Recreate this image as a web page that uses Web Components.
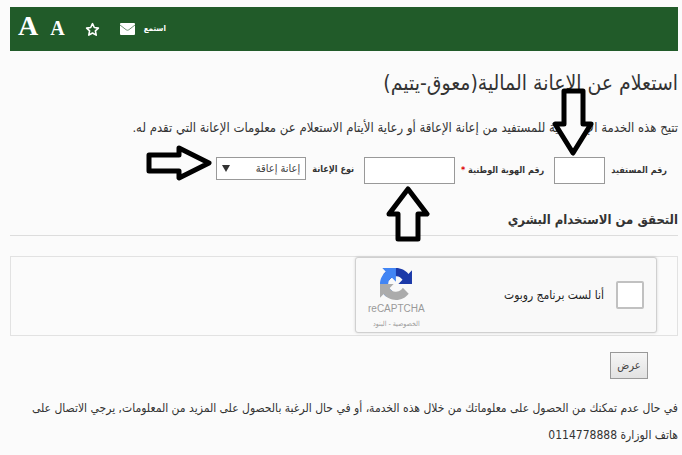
<!DOCTYPE html>
<html lang="ar" dir="rtl">
<head>
<meta charset="utf-8">
<title>استعلام عن الإعانة المالية</title>
<style>
  body {
    margin: 0;
    background: #fbfbfb;
    color: #333;
    font-family: "DejaVu Sans Condensed", "DejaVu Sans", sans-serif;
    font-size: 12px;
  }
</style>
</head>
<body>
<aid-page>
  <tool-bar slot="bar"></tool-bar>
  <span slot="title">استعلام عن الاعانة المالية(معوق-يتيم)</span>
  <span slot="intro">تتيح هذه الخدمة الإلكترونية للمستفيد من إعانة الإعاقة أو رعاية الأيتام الاستعلام عن معلومات الإعانة التي تقدم له.</span>
  <text-field slot="fields" class="narrow" label="رقم المستفيد" arrow="down"></text-field>
  <text-field slot="fields" class="wide" label="رقم الهوية الوطنية" arrow="up" required></text-field>
  <select-field slot="fields" label="نوع الإعانة" option="إعانة إعاقة"></select-field>
  <span slot="check-title">التحقق من الاستخدام البشري</span>
  <robot-check slot="check"></robot-check>
  <show-button slot="action">عرض</show-button>
  <span slot="note">في حال عدم تمكنك من الحصول على معلوماتك من خلال هذه الخدمة، أو في حال الرغبة بالحصول على المزيد من المعلومات, يرجي الاتصال على هاتف الوزارة 0114778888</span>
</aid-page>
<script>
class BaseElement extends HTMLElement {
  constructor() {
    super();
    this.attachShadow({ mode: 'open' });
  }
  connectedCallback() {
    this.shadowRoot.innerHTML = this.render();
  }
  attr(name) {
    return this.getAttribute(name) || '';
  }
}

customElements.define('aid-page',
class extends BaseElement {
  render() {
    return `
      <style>
        :host {
          display: block;
          padding: 7px 4px 8px 10px;
        }
        h1, h2, p { margin: 0; }
        h1 {
          margin-top: 16px;
          font-size: 21px;
          line-height: 32px;
          font-weight: normal;
        }
        .intro {
          margin-top: 16px;
          font-size: 13px;
          line-height: 26px;
        }
        .fields {
          display: flex;
          align-items: flex-start;
          gap: 10px;
          margin-top: 16px;
          padding-right: 11px;
        }
        h2 {
          margin-top: 20px;
          border-bottom: 1px solid #ddd;
          font-size: 13px;
          line-height: 31px;
        }
        .check {
          display: flex;
          margin-top: 20px;
          padding: 0 20px 2px 0;
          border: 1px solid #e2e2e2;
        }
        .action {
          margin-top: 16px;
          padding-right: 30px;
        }
        .note {
          margin-top: 16px;
          line-height: 27px;
        }
      </style>
      <slot name="bar"></slot>
      <h1><slot name="title"></slot></h1>
      <p class="intro"><slot name="intro"></slot></p>
      <div class="fields"><slot name="fields"></slot></div>
      <h2><slot name="check-title"></slot></h2>
      <div class="check"><slot name="check"></slot></div>
      <div class="action"><slot name="action"></slot></div>
      <p class="note"><slot name="note"></slot></p>
    `;
  }
});

customElements.define('tool-bar',
class extends BaseElement {
  render() {
    return `
      <style>
        :host {
          display: flex;
          direction: ltr;
          align-items: center;
          height: 44px;
          padding-left: 8px;
          background: #215b29;
          color: #fff;
        }
        a {
          display: flex;
          color: inherit;
          text-decoration: none;
        }
        .sizes {
          display: flex;
          align-items: baseline;
          gap: 12px;
          padding-bottom: 4px;
          font: bold 20px/28px "Liberation Serif", serif;
        }
        .big { font-size: 28px; }
        .star { margin: 0 20px; }
        .listen {
          margin-left: 9px;
          font: bold 8px/16px "DejaVu Sans Condensed", "DejaVu Sans", sans-serif;
        }
      </style>
      <div class="sizes">
        <a class="big" href="#">A</a>
        <a href="#">A</a>
      </div>
      <a class="star" href="#" aria-label="المفضلة">
        <svg width="15" height="15" viewBox="0 0 15 14">
          <path d="M7.5 1.2 9.3 5 13.4 5.6 10.4 8.4 11.2 12.6 7.500 10.500 3.800 12.600 4.600 8.400 1.600 5.600 5.700 5Z" fill="none" stroke="#fff" stroke-width="1.6" stroke-linejoin="round"/>
        </svg>
      </a>
      <a href="#" aria-label="البريد">
        <svg width="15" height="12" viewBox="0 0 15 12">
          <rect width="15" height="12" rx="1" fill="#fff"/>
          <path d="M0 2 6.2 6.8Q7.5 7.7 8.8 6.8L15 2" fill="none" stroke="#6f9474" stroke-width="1"/>
        </svg>
      </a>
      <a class="listen" href="#">استمع</a>
    `;
  }
});

// Outlined pointer: to="up", "down" or "right"
customElements.define('hint-arrow',
class extends BaseElement {
  render() {
    const shapes = {
      up: [44, 56, 'M22 3 41 28H32V53H12V28H3Z'],
      down: [42, 68, 'M12 3H31V36H39L21 65 3 36H12Z'],
      right: [66, 36, 'M3 10H33V3L63 18 33 33V26H3Z']
    };
    const [w, h, d] = shapes[this.attr('to')];
    return `
      <style>
        :host { display: block; pointer-events: none; }
        svg { display: block; }
      </style>
      <svg width="${w}" height="${h}" viewBox="0 0 ${w} ${h}" aria-hidden="true">
        <path d="${d}" fill="#fbfbfb" stroke="#000" stroke-width="5" stroke-linejoin="round"/>
      </svg>
    `;
  }
});

customElements.define('text-field',
class extends BaseElement {
  render() {
    return `
      <style>
        :host { display: flex; gap: 6px; }
        :host(.narrow) { --w: 51px; }
        :host(.wide) { --w: 91px; }
        label {
          font-weight: bold;
          font-size: 9px;
          line-height: 27px;
          white-space: nowrap;
        }
        i { color: #d00; font-style: normal; }
        .box { position: relative; }
        input {
          display: block;
          box-sizing: border-box;
          width: var(--w);
          height: 27px;
          margin: 0;
          border: 1px solid #999;
          background: #fff;
          font: inherit;
        }
        hint-arrow { position: absolute; z-index: 1; }
        .down { bottom: 28px; left: -2px; }
        .up { top: 29px; left: 22px; }
      </style>
      <label for="f">${this.attr('label')}${this.hasAttribute('required') ? ' <i>*</i>' : ''}</label>
      <div class="box">
        <input id="f" type="text">
        <hint-arrow class="${this.attr('arrow')}" to="${this.attr('arrow')}"></hint-arrow>
      </div>
    `;
  }
});

customElements.define('select-field',
class extends BaseElement {
  render() {
    return `
      <style>
        :host { display: flex; gap: 6px; }
        label {
          font-weight: bold;
          font-size: 9px;
          line-height: 24px;
          white-space: nowrap;
        }
        .box { position: relative; }
        select {
          display: block;
          appearance: none;
          width: 90px;
          height: 23px;
          margin: 0;
          padding: 0 5px;
          border: 1px solid #999;
          border-radius: 0;
          background: #fff;
          color: #444;
          font: inherit;
          font-size: 11px;
        }
        .mark {
          position: absolute;
          left: 6px;
          top: 8px;
          border: solid transparent;
          border-width: 7px 4px 0;
          border-top-color: #333;
        }
        hint-arrow { position: absolute; top: -12px; right: 94px; }
      </style>
      <label for="s">${this.attr('label')}</label>
      <div class="box">
        <select id="s"><option>${this.attr('option')}</option></select>
        <span class="mark"></span>
        <hint-arrow to="right"></hint-arrow>
      </div>
    `;
  }
});

customElements.define('robot-check',
class extends BaseElement {
  render() {
    return `
      <style>
        :host {
          display: flex;
          align-items: center;
          box-sizing: border-box;
          width: 302px;
          height: 76px;
          padding: 0 12px;
          border: 1px solid #d0d0d0;
          border-radius: 3px;
          background: #f9f9f9;
          box-shadow: 0 0 3px rgba(0, 0, 0, .15);
          font-family: "Liberation Sans", "DejaVu Sans Condensed", "DejaVu Sans", sans-serif;
        }
        input {
          appearance: none;
          width: 28px;
          height: 28px;
          margin: 0;
          border: 2px solid #c1c1c1;
          border-radius: 2px;
          background: #fff;
        }
        label {
          flex: 1;
          margin-right: 12px;
          color: #222;
          font-size: 12px;
        }
        .brand {
          display: flex;
          flex-direction: column;
          align-items: center;
          padding-top: 8px;
          color: #999;
          font-size: 10px;
        }
        .brand span { line-height: 18px; }
        .links { line-height: 12px; font-size: 7px; }
        a { color: inherit; text-decoration: none; }
      </style>
      <input id="r" type="checkbox">
      <label for="r">أنا لست برنامج روبوت</label>
      <div class="brand">
        <svg width="32" height="32" viewBox="0 0 64 64" aria-hidden="true">
          <path fill="#1c3aa9" d="M64 31.955l-.033-1.37V4.687l-7.16 7.16C50.948 4.674 42.033.093 32.05.093c-10.389 0-19.622 4.96-25.458 12.64l11.736 11.86a15.55 15.55 0 0 1 4.754-5.334c2.05-1.6 4.952-2.906 8.968-2.906.485 0 .86.057 1.135.163 4.976.393 9.288 3.14 11.828 7.124l-8.307 8.307L64 31.953"/>
          <path fill="#4285f4" d="M31.862.094l-1.37.033H4.594l7.16 7.16C4.58 13.147 0 22.06 0 32.046c0 10.388 4.96 19.622 12.64 25.458L24.5 45.768a15.55 15.55 0 0 1-5.334-4.754c-1.6-2.05-2.906-4.952-2.906-8.968 0-.485.057-.86.163-1.135.393-4.976 3.14-9.288 7.124-11.828l8.307 8.307L31.86.095"/>
          <path fill="#ababab" d="M.001 32.045l.033 1.37v25.898l7.16-7.16c5.86 7.173 14.774 11.754 24.757 11.754 10.389 0 19.622-4.96 25.458-12.64l-11.736-11.86a15.55 15.55 0 0 1-4.754 5.334c-2.05 1.6-4.952 2.906-8.968 2.906-.485 0-.86-.057-1.135-.163-4.976-.393-9.288-3.14-11.828-7.124l8.307-8.307c-10.522.04-22.4.066-27.295-.005"/>
        </svg>
        <span>reCAPTCHA</span>
        <div class="links"><a href="#">الخصوصية</a> - <a href="#">البنود</a></div>
      </div>
    `;
  }
});

customElements.define('show-button',
class extends BaseElement {
  render() {
    return `
      <style>
        :host { display: block; }
        button {
          display: block;
          width: 38px;
          height: 27px;
          margin: 0;
          padding: 0;
          border: 1px solid #999;
          background: linear-gradient(#f6f6f6, #e2e2e2);
          color: #444;
          font: inherit;
          font-size: 11px;
        }
      </style>
      <button type="button"><slot></slot></button>
    `;
  }
});
</script>
</body>
</html>
